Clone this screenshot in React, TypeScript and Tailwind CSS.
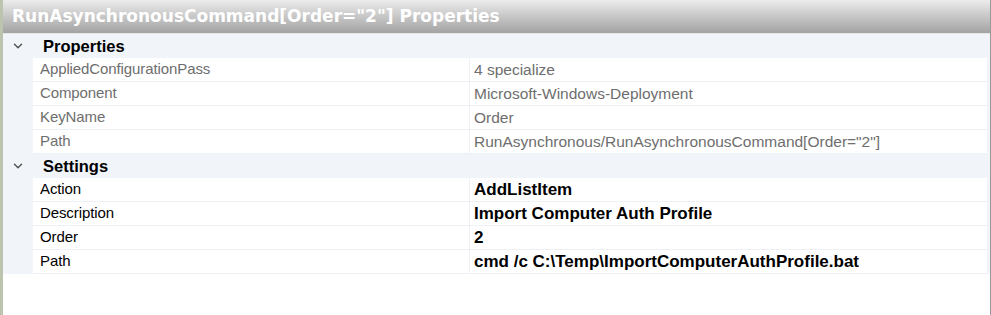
import { ChevronDown } from 'lucide-react';

type Row = { name: string; value: string };

const sections: { title: string; readOnly: boolean; rows: Row[] }[] = [
  {
    title: 'Properties',
    readOnly: true,
    rows: [
      { name: 'AppliedConfigurationPass', value: '4 specialize' },
      { name: 'Component', value: 'Microsoft-Windows-Deployment' },
      { name: 'KeyName', value: 'Order' },
      { name: 'Path', value: 'RunAsynchronous/RunAsynchronousCommand[Order="2"]' },
    ],
  },
  {
    title: 'Settings',
    readOnly: false,
    rows: [
      { name: 'Action', value: 'AddListItem' },
      { name: 'Description', value: 'Import Computer Auth Profile' },
      { name: 'Order', value: '2' },
      { name: 'Path', value: 'cmd /c C:\\Temp\\ImportComputerAuthProfile.bat' },
    ],
  },
];

export default function App() {
  return (
    <div
      className="w-[991px] h-[315px] flex bg-white overflow-hidden"
      style={{ fontFamily: '"Liberation Sans", Arial, sans-serif' }}
    >
      {/* left frame */}
      <div className="w-[3px] bg-[#bcc4ad] shrink-0" />
      <div className="flex-1 flex flex-col border-r border-[#9a9a9a]">
        {/* title bar */}
        <div className="h-[34px] flex items-center px-[9px] bg-gradient-to-b from-[#ececec] to-[#a3a3a3] border-b border-[#e6e6e6]">
          <span
            className="text-white font-bold text-[17px]"
            style={{ fontFamily: '"DejaVu Sans", Verdana, sans-serif' }}
          >
            RunAsynchronousCommand[Order="2"] Properties
          </span>
        </div>

        {/* property grid */}
        <div className="flex flex-col">
          {sections.map((s) => (
            <div key={s.title} className="flex flex-col">
              <div className="h-[24px] flex items-center bg-[#f1f4f9]">
                <div className="w-[30px] flex justify-center">
                  <ChevronDown size={14} strokeWidth={2.5} className="text-[#555]" />
                </div>
                <span className="pl-[10px] font-bold text-[16.5px] text-black">{s.title}</span>
              </div>
              {s.rows.map((r, i) => (
                <div key={i} className="h-[24px] flex bg-[#f1f4f9]">
                  <div className="w-[30px] shrink-0" />
                  <div className="flex-1 flex bg-white border-b border-[#edf0f4] mr-[3px]">
                    <div
                      className={`w-[437px] shrink-0 pl-[7px] flex items-center text-[15px] tracking-[-0.1px] border-r border-[#edf0f4] ${
                        s.readOnly ? 'text-[#6e6e6e]' : 'text-black'
                      }`}
                    >
                      {r.name}
                    </div>
                    <div
                      className={`flex-1 pl-[4px] flex items-center ${
                        s.readOnly ? 'text-[15.5px] text-[#6e6e6e]' : 'text-[17px] text-black font-bold'
                      }`}
                    >
                      {r.value}
                    </div>
                  </div>
                </div>
              ))}
            </div>
          ))}
        </div>
      </div>
    </div>
  );
}
